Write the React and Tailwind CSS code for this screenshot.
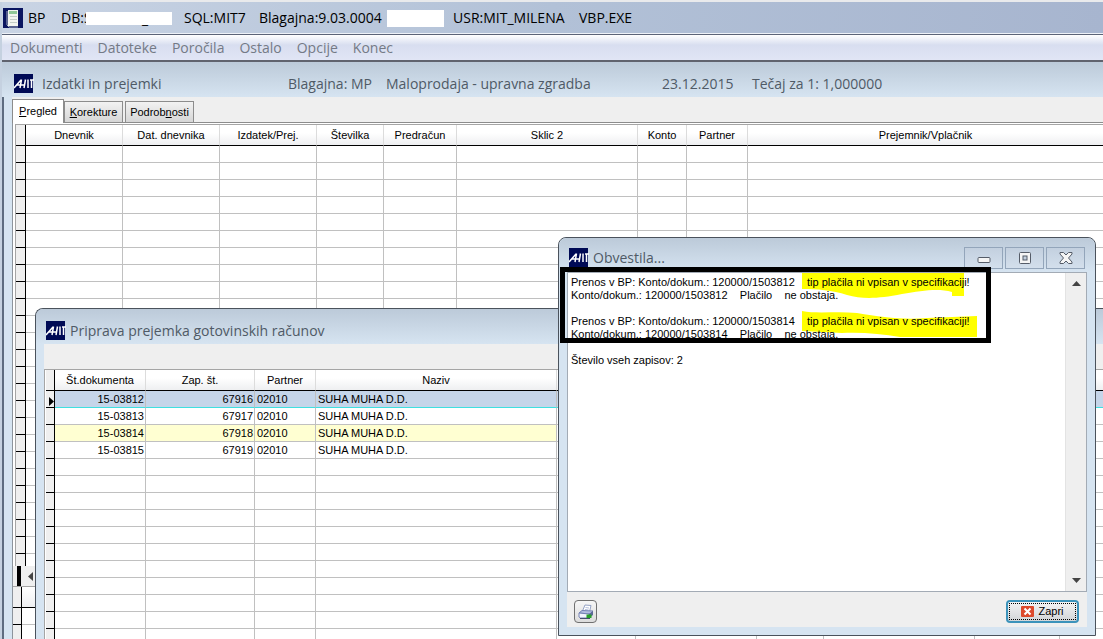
import React from "react";

const menuItems = ["Dokumenti", "Datoteke", "Poročila", "Ostalo", "Opcije", "Konec"];

const dnevnikColumns = [
  { label: "Dnevnik", width: "w-[97px]" },
  { label: "Dat. dnevnika", width: "w-[97px]" },
  { label: "Izdatek/Prej.", width: "w-[97px]" },
  { label: "Številka", width: "w-[67px]" },
  { label: "Predračun", width: "w-[73px]" },
  { label: "Sklic 2", width: "w-[181px]" },
  { label: "Konto", width: "w-[49px]" },
  { label: "Partner", width: "w-[61px]" },
  { label: "Prejemnik/Vplačnik", width: "" },
];

const racuniColumns = [
  { label: "Št.dokumenta", width: "w-[91px]" },
  { label: "Zap. št.", width: "w-[109px]" },
  { label: "Partner", width: "w-[61px]" },
  { label: "Naziv", width: "w-[241px]" },
  { label: "", width: "w-[79px]" },
  { label: "", width: "w-[121px]" },
  { label: "", width: "w-[67px]" },
  { label: "", width: "w-[151px]" },
  { label: "", width: "w-[85px]" },
  { label: "", width: "" },
];

const racuni = [
  { dokument: "15-03812", zap: "67916", partner: "02010", naziv: "SUHA MUHA D.D." },
  { dokument: "15-03813", zap: "67917", partner: "02010", naziv: "SUHA MUHA D.D." },
  { dokument: "15-03814", zap: "67918", partner: "02010", naziv: "SUHA MUHA D.D." },
  { dokument: "15-03815", zap: "67919", partner: "02010", naziv: "SUHA MUHA D.D." },
];

const MitLogo = () => (
  <svg width="20" height="20" viewBox="0 0 20 20" className="shrink-0" role="img" aria-label="MIT">
    <rect width="19" height="19" fill="#000a55" />
    <path
      d="M0 14L7 6M7.5 5.5L6 14M3 11H10M11.5 5.5L10 14M14 5.5V14M16 6H20M17.5 6V14"
      stroke="#fff"
      strokeWidth="1.5"
      fill="none"
    />
  </svg>
);

const HeadCell = ({ children }) => (
  <th className="h-5 p-0 text-center font-normal border-r border-[#dcdcdc] border-b border-b-black bg-linear-to-b from-white from-40% to-[#eeeff1] last:border-r-0">
    {children}
  </th>
);

const Selector = ({ children }) => (
  <td className="p-0 bg-[#efefef] border-r border-b border-black">{children}</td>
);

const DnevnikTable = () => (
  <table className="w-full table-fixed border-separate border-spacing-0">
    <colgroup>
      <col className="w-[10px]" />
      {dnevnikColumns.map((c) => (
        <col key={c.label} className={c.width} />
      ))}
    </colgroup>
    <thead>
      <tr className="h-[21px]">
        <td className="p-0 bg-[#efefef] border-r border-b border-black" />
        {dnevnikColumns.map((c) => (
          <HeadCell key={c.label}>{c.label}</HeadCell>
        ))}
      </tr>
    </thead>
    <tbody>
      {Array.from({ length: 24 }).map((_, i) => (
        <tr key={i} className="h-[17px]">
          <Selector />
          {dnevnikColumns.map((c) => (
            <td
              key={c.label}
              className="p-0 border-r border-b border-[#c0c0c0] last:border-r-0"
            />
          ))}
        </tr>
      ))}
      <tr className="h-3">
        <td className="p-0 bg-[#efefef] border-r border-black" />
        <td colSpan={9} className="p-0" />
      </tr>
    </tbody>
  </table>
);

const RacuniRow = ({ row, index }) => {
  const selected = index === 0;
  const tint = selected
    ? "bg-[#c5d5e9] border-b-[#3fe0e0]"
    : index === 2
    ? "bg-[#ffffd2] border-b-[#c0c0c0]"
    : "border-b-[#c0c0c0]";
  const rest = selected ? tint : "border-b-[#c0c0c0]";
  const cell =
    "p-0 overflow-hidden whitespace-nowrap leading-4 border-r border-b border-r-[#c0c0c0]";

  return (
    <tr className="h-[17px]">
      <Selector>
        {selected && (
          <svg width="5" height="9" viewBox="0 0 5 9" className="block ml-auto mt-1">
            <path d="M0 0L5 4.5L0 9Z" fill="#000" />
          </svg>
        )}
      </Selector>
      <td className={`${cell} ${tint} pr-px text-right`}>{row?.dokument}</td>
      <td className={`${cell} ${tint} pr-px text-right`}>{row?.zap}</td>
      <td className={`${cell} ${tint} pl-0.5`}>{row?.partner}</td>
      <td className={`${cell} ${tint} pl-0.5`}>{row?.naziv}</td>
      {racuniColumns.slice(4).map((c, i) => (
        <td key={i} className={`${cell} ${rest}`} />
      ))}
    </tr>
  );
};

const RacuniWindow = () => (
  <section className="absolute top-[308px] bottom-0 left-[35px] -right-2 flex flex-col overflow-hidden rounded-tl-lg border-t border-l border-[#4a525c] bg-[#d6e4f1]">
    <header className="flex h-[35px] shrink-0 items-center gap-1 bg-linear-to-b from-[#bccad9] to-[#d6e4f1] pt-2 pl-[10px] font-['Open_Sans',sans-serif] text-sm text-[#4f5a66]">
      <MitLogo />
      <h2>Priprava prejemka gotovinskih računov</h2>
    </header>
    <div className="ml-2 flex-1 bg-white">
      <div className="h-[25px] bg-[#efefef]" />
      <div className="border-t border-l border-[#a5a5a5] pl-px">
        <table className="w-full table-fixed border-separate border-spacing-0">
          <colgroup>
            <col className="w-[9px]" />
            {racuniColumns.map((c, i) => (
              <col key={i} className={c.width} />
            ))}
          </colgroup>
          <thead>
            <tr className="h-[21px]">
              <td className="p-0 bg-[#efefef] border-r border-b border-black" />
              {racuniColumns.map((c, i) => (
                <HeadCell key={i}>{c.label}</HeadCell>
              ))}
            </tr>
          </thead>
          <tbody>
            {Array.from({ length: 16 }).map((_, i) => (
              <RacuniRow key={i} row={racuni[i]} index={i} />
            ))}
          </tbody>
        </table>
      </div>
    </div>
  </section>
);

const CaptionButton = ({ label, children }) => (
  <button
    type="button"
    aria-label={label}
    className="flex h-[22px] w-[39px] items-center justify-center border border-[#93a5ba] bg-linear-to-b from-[#c3d0df] to-[#d3dfec]"
  >
    {children}
  </button>
);

const ObvestilaWindow = () => (
  <section
    role="dialog"
    aria-label="Obvestila"
    className="absolute top-[237px] left-[558px] flex h-[399px] w-[538px] flex-col rounded-t-lg border border-[#4a525c] bg-[#d6e4f1] px-2 pb-2"
  >
    <header className="-mx-2 flex h-[34px] shrink-0 items-center gap-1 rounded-t-lg bg-linear-to-b from-[#bccad9] to-[#d6e4f1] pt-[10px] pr-[10px] pl-[10px] pb-1 font-['Open_Sans',sans-serif] text-sm text-[#4f5a66]">
      <MitLogo />
      <h2 className="flex-1">Obvestila...</h2>
      <div className="flex gap-0.5">
        <CaptionButton label="Pomanjšaj">
          <svg width="14" height="12" viewBox="0 0 14 12">
            <rect x="1" y="5.5" width="12" height="5" rx="1" fill="#f5f5f5" stroke="#555c68" />
          </svg>
        </CaptionButton>
        <CaptionButton label="Povečaj">
          <svg width="14" height="12" viewBox="0 0 14 12">
            <rect x="1.5" y=".5" width="11" height="11" rx="1" fill="#f5f5f5" stroke="#555c68" />
            <rect x="5" y="4" width="4" height="4" fill="#c3d0df" stroke="#555c68" />
          </svg>
        </CaptionButton>
        <CaptionButton label="Zapri okno">
          <svg width="14" height="12" viewBox="0 0 14 12">
            <path
              d="M1 .5H4.5L7 3L9.5 .5H13V2L9.5 6L13 10V11.5H9.5L7 9L4.5 11.5H1V10L4.5 6L1 2Z"
              fill="#f5f5f5"
              stroke="#555c68"
              strokeLinejoin="round"
            />
          </svg>
        </CaptionButton>
      </div>
    </header>

    <div className="relative flex flex-1 border border-[#a3abb5] bg-white">
      {/* marker strokes under the warnings */}
      <svg width="200" height="70" viewBox="0 0 200 70" className="absolute top-0 left-[234px]">
        <path
          d="M0 0H162V23H150V19C135 15 120 18 100 21C75 26 60 26 45 22C30 17 15 16 0 16Z"
          fill="#ff0"
        />
        <path
          d="M0 38C15 41 35 38 55 40C80 44 100 47 125 45L175 43V64H98C80 61 60 59 40 60L0 58Z"
          fill="#ff0"
        />
      </svg>
      <div className="relative flex-1 overflow-hidden whitespace-pre pt-[3px] pl-[3px] leading-[13px]">
        <p>
          {"Prenos v BP: Konto/dokum.: 120000/1503812    tip plačila ni vpisan v specifikaciji!"}
        </p>
        <p>{"Konto/dokum.: 120000/1503812    Plačilo    ne obstaja."}</p>
        <p>&nbsp;</p>
        <p>
          {"Prenos v BP: Konto/dokum.: 120000/1503814    tip plačila ni vpisan v specifikaciji!"}
        </p>
        <p>{"Konto/dokum.: 120000/1503814    Plačilo    ne obstaja."}</p>
        <p>&nbsp;</p>
        <p>Število vseh zapisov: 2</p>
      </div>
      <div className="flex w-[21px] flex-col items-center justify-between border-l border-[#e3e3e3] bg-[#efefef] py-2">
        <button type="button" aria-label="Gor">
          <svg width="9" height="5" viewBox="0 0 9 5" className="block">
            <path d="M4.5 0L9 5H0Z" fill="#444" />
          </svg>
        </button>
        <button type="button" aria-label="Dol">
          <svg width="9" height="5" viewBox="0 0 9 5" className="block">
            <path d="M0 0H9L4.5 5Z" fill="#444" />
          </svg>
        </button>
      </div>
    </div>

    <footer className="flex h-[35px] shrink-0 items-center justify-between bg-[#efefef] pr-2 pl-[7px] pt-1">
      <button
        type="button"
        aria-label="Tiskaj"
        className="flex size-[23px] items-center justify-center rounded-sm border border-[#707070] bg-linear-to-b from-[#f6f6f6] to-[#dcdcdc]"
      >
        <svg width="16" height="16" viewBox="0 0 16 16">
          <path d="M4.5 7L7 1L13 1.5L11.5 8Z" fill="#fff" stroke="#93a1c4" />
          <path d="M7.5 3.5L11 4M7 5.5L10.5 6" stroke="#b3bedb" />
          <path d="M1 9L4 6.5L15 7L12 10Z" fill="#b4bee2" stroke="#7482b4" />
          <path d="M1 9L11 10V14H2.5L1 13Z" fill="#f3f5fc" stroke="#7482b4" />
          <path d="M11 10L15 7V11L11 14Z" fill="#5d6996" />
          <rect x="8.5" y="10.5" width="5" height="3.5" fill="#27a02a" />
          <path d="M2 14.5H12" stroke="#454c6c" />
        </svg>
      </button>
      <button
        type="button"
        className="h-[23px] w-[73px] rounded-sm border-2 border-[#3c93bb] bg-linear-to-b from-[#f4f4f4] to-[#d2d5d8] p-px"
      >
        <span className="flex h-full items-center justify-center gap-1 border border-dotted border-black">
          <svg width="13" height="11" viewBox="0 0 13 11">
            <rect width="13" height="11" rx="1" fill="#dd4a2c" />
            <path d="M3.5 2.5L9.5 8.5M9.5 2.5L3.5 8.5" stroke="#fff" strokeWidth="2" />
          </svg>
          Zapri
        </span>
      </button>
    </footer>
  </section>
);

const IzdatkiWindow = () => (
  <section className="flex flex-col">
    <header className="flex h-[35px] items-center bg-linear-to-b from-[#bccad9] to-[#d6e4f1] pt-2 pl-3 font-['Open_Sans',sans-serif] text-sm whitespace-pre text-[#4f5a66]">
      <MitLogo />
      <h1 className="w-[254px] pl-2">Izdatki in prejemki</h1>
      <span className="w-[98px]">Blagajna: MP</span>
      <span className="w-[276px]">Maloprodaja - upravna zgradba</span>
      <span className="w-[90px]">23.12.2015</span>
      <span>Tečaj za 1: 1,000000</span>
    </header>
    <div className="flex border-l-2 border-[#5e6c80]">
      <div className="w-2 shrink-0 bg-[#d6e4f1]" />
      <div className="min-w-0 flex-1 border-l border-[#8d949c] bg-white">
        <div
          role="tablist"
          className="-ml-px flex h-[26px] items-end bg-[#efefef] border-b border-[#8c8c8c]"
        >
          <button
            type="button"
            role="tab"
            aria-selected="true"
            className="-mb-px h-6 w-[52px] border border-b-0 border-[#8c8c8c] bg-white pb-px"
          >
            <u>P</u>regled
          </button>
          <button
            type="button"
            role="tab"
            className="h-[21px] w-[59px] border border-b-0 border-[#8c8c8c] bg-linear-to-b from-[#f2f2f2] to-[#d6d6d6]"
          >
            <u>K</u>orekture
          </button>
          <button
            type="button"
            role="tab"
            className="ml-0.5 h-[21px] w-[69px] border border-b-0 border-[#8c8c8c] bg-linear-to-b from-[#f2f2f2] to-[#d6d6d6]"
          >
            Podrob<u>n</u>osti
          </button>
        </div>
        <div className="ml-[2px] mt-px border-t border-l border-[#a5a5a5]">
          <DnevnikTable />
        </div>
        <div className="flex h-[21px] items-center border-b border-[#a5a5a5] bg-[#efefef] pl-1">
          <span className="h-5 w-1 bg-black" />
          <button type="button" aria-label="Levo" className="ml-[7px]">
            <svg width="5" height="9" viewBox="0 0 5 9" className="block">
              <path d="M5 0V9L0 4.5Z" fill="#444" />
            </svg>
          </button>
        </div>
        <table className="w-full table-fixed border-separate border-spacing-0">
          <tbody>
            <tr className="h-[21px]">
              <td className="w-[9px] p-0 bg-[#efefef] border-r border-b border-black" />
              <td className="p-0 border-b border-black bg-linear-to-b from-white to-[#eeeff1]" />
            </tr>
            {[0, 1].map((i) => (
              <tr key={i} className="h-[17px]">
                <Selector />
                <td className="p-0 border-b border-[#c0c0c0]" />
              </tr>
            ))}
          </tbody>
        </table>
      </div>
    </div>
  </section>
);

export default function App() {
  return (
    <div className="relative h-screen overflow-hidden bg-[#c5d1e0] pl-0.5 font-['Liberation_Sans',Arial,sans-serif] text-[11px] text-black">
      <div className="h-0.5 -ml-0.5 bg-[#e9eaec]" />
      <header className="flex h-8 items-center border-b border-[#eef2f8] bg-linear-to-r from-[#c9d4e4] via-[#b2c1d7] to-[#a7b5cf] pt-px pl-px font-['Open_Sans',sans-serif] text-sm whitespace-pre">
        <svg width="20" height="20" viewBox="0 0 20 20" className="shrink-0">
          <rect width="20" height="20" fill="#0a1560" />
          <path d="M5 2H15V18H5Z" fill="#f2f4ef" />
          <path d="M6 3H14V6H6Z" fill="#8fc796" />
          <path d="M7 8.5H14M7 11.5H14M7 14.5H14" stroke="#c3ccc6" />
          <path d="M4 3V17L6 19H15" stroke="#a7b1bd" fill="none" />
        </svg>
        <span className="w-[33px] shrink-0 pl-[5px]">BP</span>
        <span className="ml-[5px] w-[25px] shrink-0">DB:S</span>
        <span className="relative mr-3 h-[13px] w-[86px] shrink-0 bg-white pl-14 leading-[13px]">
          _
        </span>
        <span className="w-[75px] shrink-0">SQL:MIT7</span>
        <span className="w-32 shrink-0">Blagajna:9.03.0004</span>
        <span className="mr-[9px] h-[17px] w-[57px] shrink-0 bg-white" />
        <span className="w-[126px] shrink-0">USR:MIT_MILENA</span>
        <span>VBP.EXE</span>
      </header>
      <nav className="flex h-7 items-center gap-[15px] border-t border-b-2 border-t-[#5b6377] border-b-[#60636e] bg-linear-to-b from-white via-[#d8def0] via-40% to-[#e1e5f5] pt-px pl-2 font-['Open_Sans',sans-serif] text-sm text-[#747a86]">
        {menuItems.map((item) => (
          <button key={item} type="button">
            {item}
          </button>
        ))}
      </nav>

      <IzdatkiWindow />
      <RacuniWindow />
      <ObvestilaWindow />

      {/* frame drawn around the warnings */}
      <div className="pointer-events-none absolute top-[267px] left-[560px] h-[76px] w-[431px] border-[5px] border-black" />
    </div>
  );
}
